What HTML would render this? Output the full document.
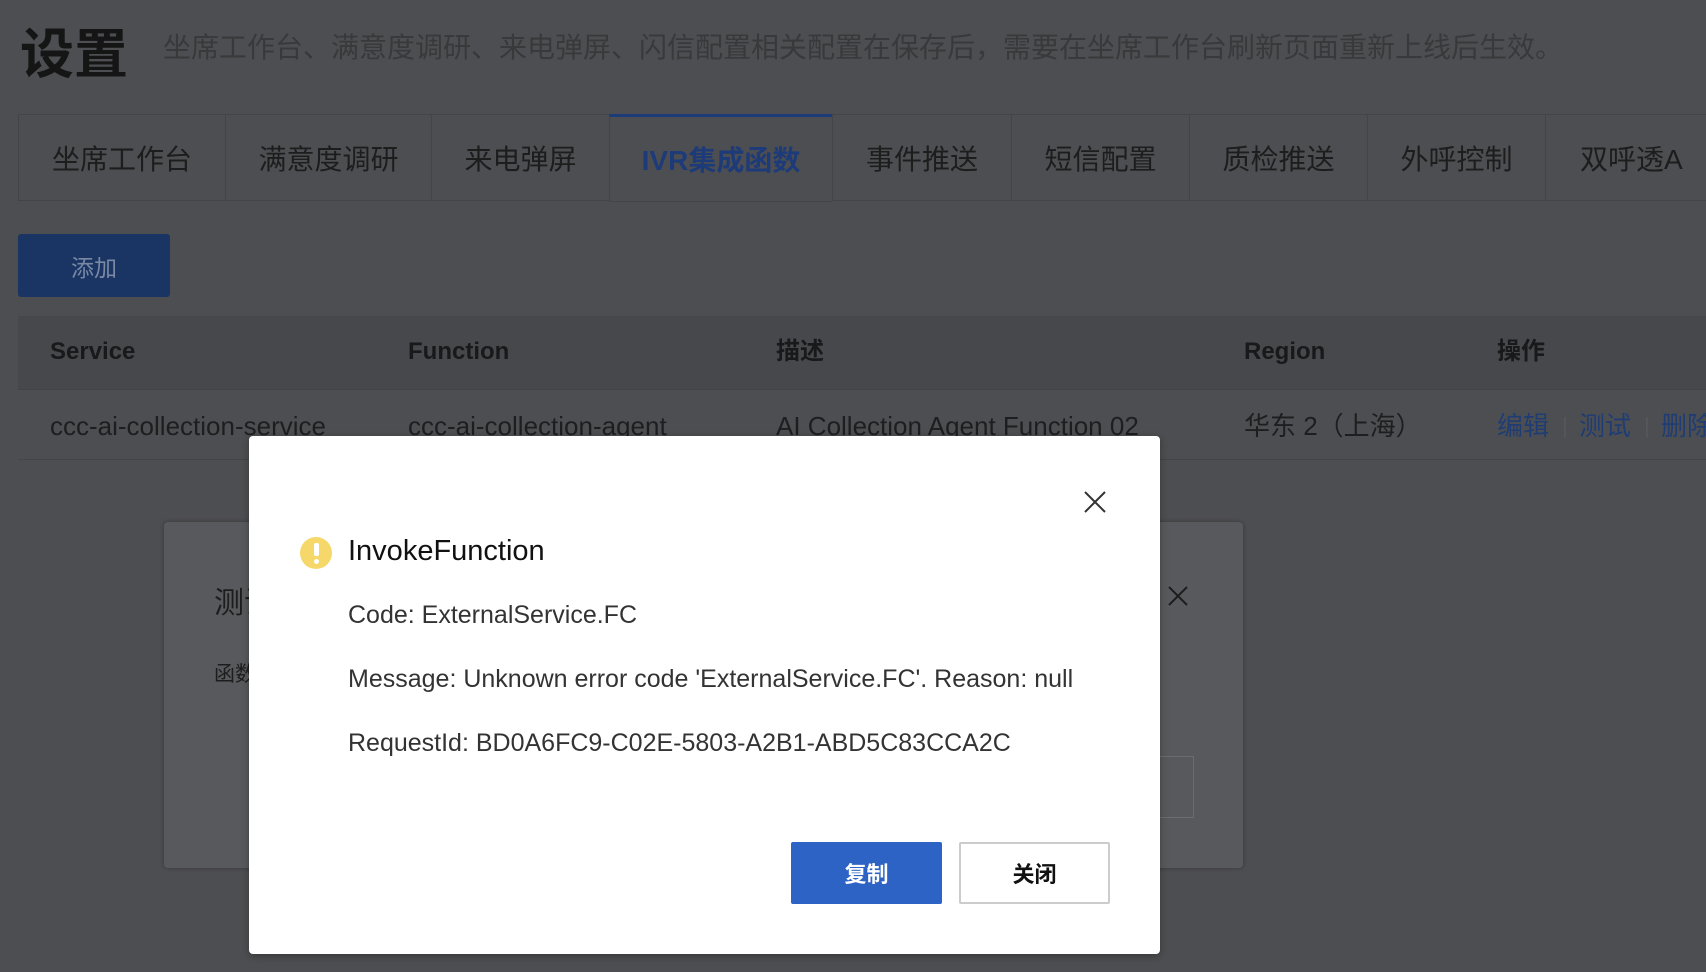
<!DOCTYPE html>
<html><head><meta charset="utf-8"><style>
*{margin:0;padding:0;box-sizing:border-box}
body{width:1706px;height:972px;overflow:hidden;background:#4d4e51;font-family:"Liberation Sans","Noto Sans CJK SC",sans-serif;position:relative;color:#1b1b1b}
.a{position:absolute;white-space:nowrap}
.tab{position:absolute;top:114px;height:87px;border:1px solid #434446;border-right:none;display:flex;align-items:center;justify-content:center;font-size:28px;color:#1d1d1e}
.th{position:absolute;top:332px;height:40px;line-height:40px;font-size:24px;font-weight:bold;color:#18191a;white-space:nowrap}
.td{position:absolute;top:406px;height:40px;line-height:40px;font-size:26px;color:#1d1e1f;white-space:nowrap}
</style></head><body>
<div class="a" style="left:20px;top:10px;font-size:54px;font-weight:bold;color:#151515">设置</div>
<div class="a" style="left:163px;top:26px;font-size:28px;color:#38393b">坐席工作台、满意度调研、来电弹屏、闪信配置相关配置在保存后，需要在坐席工作台刷新页面重新上线后生效。</div>
<div style="position:absolute;left:18px;top:114px;width:1688px;height:1px;background:#434446"></div>
<div style="position:absolute;left:18px;top:200px;width:1688px;height:1px;background:#434446"></div>
<div class="tab" style="left:18px;width:207px">坐席工作台</div>
<div class="tab" style="left:225px;width:206px">满意度调研</div>
<div class="tab" style="left:431px;width:178px">来电弹屏</div>
<div class="tab" style="left:609px;width:223px;border-top:3px solid #1d3b78;color:#1d3b78;font-weight:bold;background:#4d4e51;height:88px">IVR集成函数</div>
<div class="tab" style="left:832px;width:179px">事件推送</div>
<div class="tab" style="left:1011px;width:178px">短信配置</div>
<div class="tab" style="left:1189px;width:178px">质检推送</div>
<div class="tab" style="left:1367px;width:178px">外呼控制</div>
<div class="tab" style="left:1545px;width:178px;justify-content:flex-start;padding-left:34px">双呼透A</div>
<div class="a" style="left:18px;top:234px;width:152px;height:63px;background:#1a3564;border-radius:3px;color:#7a88a3;font-size:23px;display:flex;align-items:center;justify-content:center">添加</div>
<div style="position:absolute;left:18px;top:316px;width:1688px;height:74px;background:#46484b;border-bottom:1px solid #424346"></div>
<div class="th" style="left:50px">Service</div>
<div class="th" style="left:408px">Function</div>
<div class="th" style="left:776px">描述</div>
<div class="th" style="left:1244px">Region</div>
<div class="th" style="left:1497px">操作</div>
<div class="td" style="left:50px">ccc-ai-collection-service</div>
<div class="td" style="left:408px">ccc-ai-collection-agent</div>
<div class="td" style="left:776px">AI Collection Agent Function 02</div>
<div class="td" style="left:1244px">华东 2（上海）</div>
<div class="td" style="left:1497px;color:#1f3d73">编辑</div>
<div class="td" style="left:1562px;color:#55575a;font-size:22px">|</div>
<div class="td" style="left:1579px;color:#1f3d73">测试</div>
<div class="td" style="left:1644px;color:#55575a;font-size:22px">|</div>
<div class="td" style="left:1661px;color:#1f3d73">删除</div>
<div style="position:absolute;left:18px;top:459px;width:1688px;height:1px;background:#444548"></div>
<!-- background modal -->
<div style="position:absolute;left:164px;top:522px;width:1079px;height:346px;background:#58595c;border-radius:4px;box-shadow:0 0 4px rgba(0,0,0,.3)"></div>
<div class="a" style="left:214px;top:578px;font-size:30px;color:#1d1d1e">测试</div>
<div class="a" style="left:214px;top:658px;font-size:21px;color:#1d1d1e">函数</div>
<svg style="position:absolute;left:1167px;top:585px" width="22" height="22" viewBox="0 0 22 22"><path d="M2 2L20 20M20 2L2 20" stroke="#1d1d1e" stroke-width="2"/></svg>
<div style="position:absolute;left:1100px;top:756px;width:94px;height:62px;border:1px solid #6b6c6f;border-left:none"></div>
<!-- main modal -->
<div style="position:absolute;left:249px;top:436px;width:911px;height:518px;background:#fff;border-radius:4px;box-shadow:0 2px 8px rgba(0,0,0,.3)"></div>
<svg style="position:absolute;left:1083px;top:490px" width="24" height="24" viewBox="0 0 24 24"><path d="M2 2L22 22M22 2L2 22" stroke="#333" stroke-width="2"/></svg>
<div style="position:absolute;left:300px;top:537px;width:32px;height:32px;border-radius:50%;background:#f6d86a"></div>
<div style="position:absolute;left:314px;top:543px;width:5px;height:13px;background:#fff;border-radius:2px"></div>
<div style="position:absolute;left:314px;top:559px;width:5px;height:5px;background:#fff;border-radius:50%"></div>
<div class="a" style="left:348px;top:535px;font-size:29px;color:#111">InvokeFunction</div>
<div class="a" style="left:348px;top:601px;font-size:25px;color:#333">Code: ExternalService.FC</div>
<div class="a" style="left:348px;top:665px;font-size:25px;color:#333">Message: Unknown error code 'ExternalService.FC'. Reason: null</div>
<div class="a" style="left:348px;top:729px;font-size:25px;color:#333">RequestId: BD0A6FC9-C02E-5803-A2B1-ABD5C83CCA2C</div>
<div class="a" style="left:791px;top:842px;width:151px;height:62px;background:#2d63c5;border-radius:2px;color:#fff;font-size:22px;font-weight:bold;display:flex;align-items:center;justify-content:center">复制</div>
<div class="a" style="left:959px;top:842px;width:151px;height:62px;background:#fff;border:2px solid #ccc;border-radius:2px;color:#111;font-size:22px;font-weight:bold;display:flex;align-items:center;justify-content:center">关闭</div>
</body></html>
